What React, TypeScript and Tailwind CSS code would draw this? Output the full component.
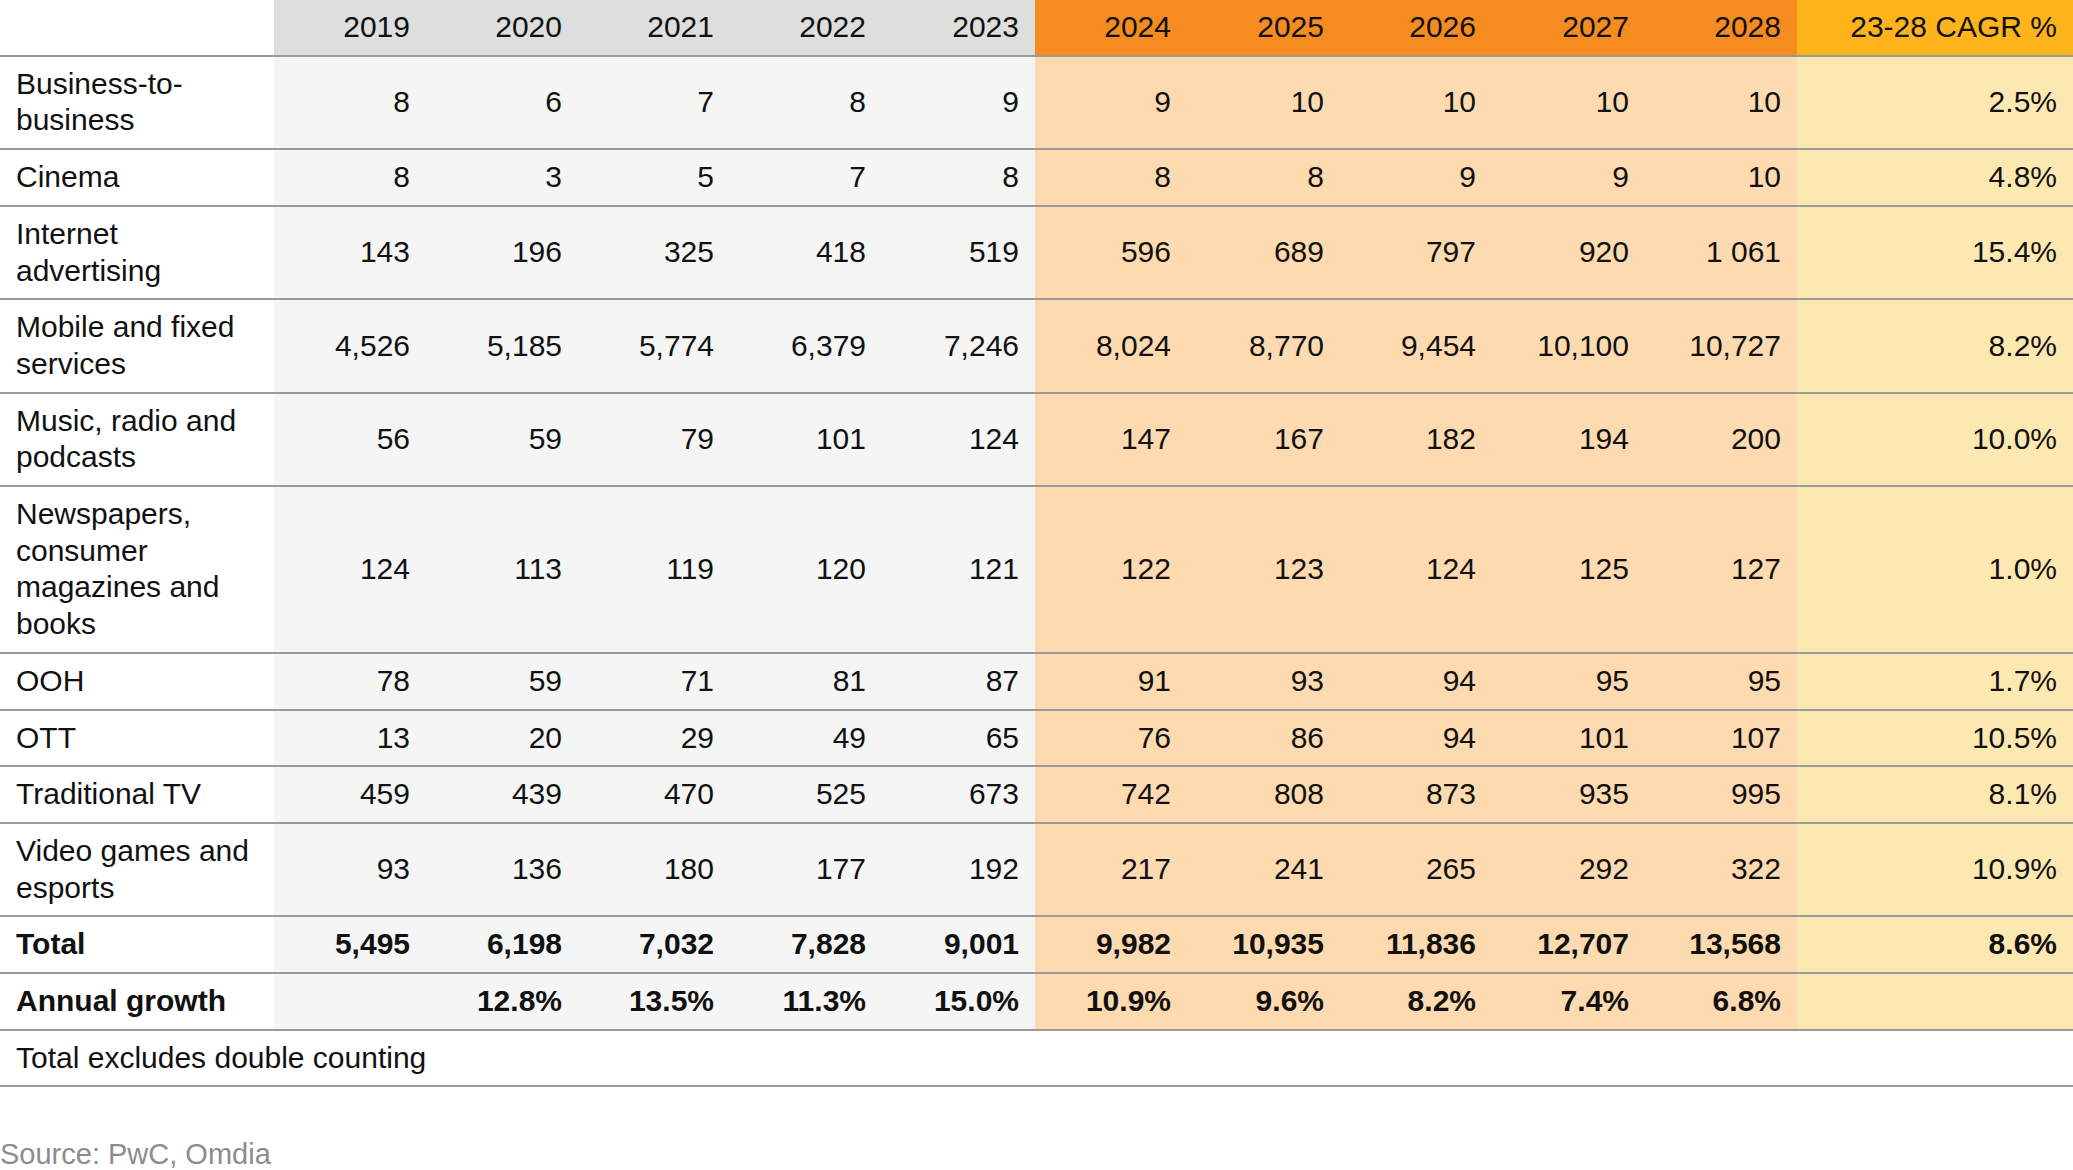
import * as React from 'react'

// ============================================================================
// Data
// ============================================================================

const HIST_YEARS = ['2019', '2020', '2021', '2022', '2023']
const FCST_YEARS = ['2024', '2025', '2026', '2027', '2028']

type Row = {
  label: string
  values: string[]
  cagr: string
  bold?: boolean
}

const ROWS: Row[] = [
  { label: 'Business-to-business', values: ['8', '6', '7', '8', '9', '9', '10', '10', '10', '10'], cagr: '2.5%' },
  { label: 'Cinema', values: ['8', '3', '5', '7', '8', '8', '8', '9', '9', '10'], cagr: '4.8%' },
  { label: 'Internet advertising', values: ['143', '196', '325', '418', '519', '596', '689', '797', '920', '1 061'], cagr: '15.4%' },
  { label: 'Mobile and fixed services', values: ['4,526', '5,185', '5,774', '6,379', '7,246', '8,024', '8,770', '9,454', '10,100', '10,727'], cagr: '8.2%' },
  { label: 'Music, radio and podcasts', values: ['56', '59', '79', '101', '124', '147', '167', '182', '194', '200'], cagr: '10.0%' },
  { label: 'Newspapers, consumer magazines and books', values: ['124', '113', '119', '120', '121', '122', '123', '124', '125', '127'], cagr: '1.0%' },
  { label: 'OOH', values: ['78', '59', '71', '81', '87', '91', '93', '94', '95', '95'], cagr: '1.7%' },
  { label: 'OTT', values: ['13', '20', '29', '49', '65', '76', '86', '94', '101', '107'], cagr: '10.5%' },
  { label: 'Traditional TV', values: ['459', '439', '470', '525', '673', '742', '808', '873', '935', '995'], cagr: '8.1%' },
  { label: 'Video games and esports', values: ['93', '136', '180', '177', '192', '217', '241', '265', '292', '322'], cagr: '10.9%' },
  { label: 'Total', values: ['5,495', '6,198', '7,032', '7,828', '9,001', '9,982', '10,935', '11,836', '12,707', '13,568'], cagr: '8.6%', bold: true },
  { label: 'Annual growth', values: ['', '12.8%', '13.5%', '11.3%', '15.0%', '10.9%', '9.6%', '8.2%', '7.4%', '6.8%'], cagr: '', bold: true },
]

const COL_WIDTHS = [274, 152, 152, 152, 152, 153, 152, 153, 152, 153, 152, 276]

const CELL = 'py-[9px] pr-4 text-right align-middle'

// ============================================================================
// App
// ============================================================================

export default function App() {
  return (
    <div
      className="w-[2073px] h-[1170px] bg-white text-[#111] text-[30px] leading-[36.7px]"
      style={{ fontFamily: '"Liberation Sans", Arial, sans-serif' }}
    >
      <table className="w-[2073px] table-fixed border-collapse">
        <colgroup>
          {COL_WIDTHS.map((w, i) => (
            <col key={i} style={{ width: w }} />
          ))}
        </colgroup>

        {/* Header */}
        <thead>
          <tr className="border-b-2 border-[#9a9a9a]">
            <th className="bg-white" />
            {HIST_YEARS.map((y) => (
              <th key={y} className={`${CELL} font-normal bg-[#dedede]`}>
                {y}
              </th>
            ))}
            {FCST_YEARS.map((y) => (
              <th key={y} className={`${CELL} font-normal bg-[#f68b20]`}>
                {y}
              </th>
            ))}
            <th className={`${CELL} font-normal bg-[#feb41a]`}>23-28 CAGR %</th>
          </tr>
        </thead>

        <tbody>
          {ROWS.map((row) => (
            <tr key={row.label} className={`border-b-2 border-[#9a9a9a] ${row.bold ? 'font-bold' : ''}`}>
              <td className="py-[9px] pl-4 pr-4 text-left align-middle bg-white">{row.label}</td>
              {row.values.map((v, i) => (
                <td key={i} className={`${CELL} ${i < 5 ? 'bg-[#f4f5f4]' : 'bg-[#fedab0]'}`}>
                  {v}
                </td>
              ))}
              <td className={`${CELL} bg-[#fee8b2]`}>{row.cagr}</td>
            </tr>
          ))}

          {/* Footnote */}
          <tr className="border-b-2 border-[#9a9a9a]">
            <td colSpan={12} className="py-[9px] pl-4 text-left bg-white">
              Total excludes double counting
            </td>
          </tr>
        </tbody>
      </table>

      <div className="mt-[52px] text-[29px] leading-[30px] text-[#8c8c8c]">Source: PwC, Omdia</div>
    </div>
  )
}
